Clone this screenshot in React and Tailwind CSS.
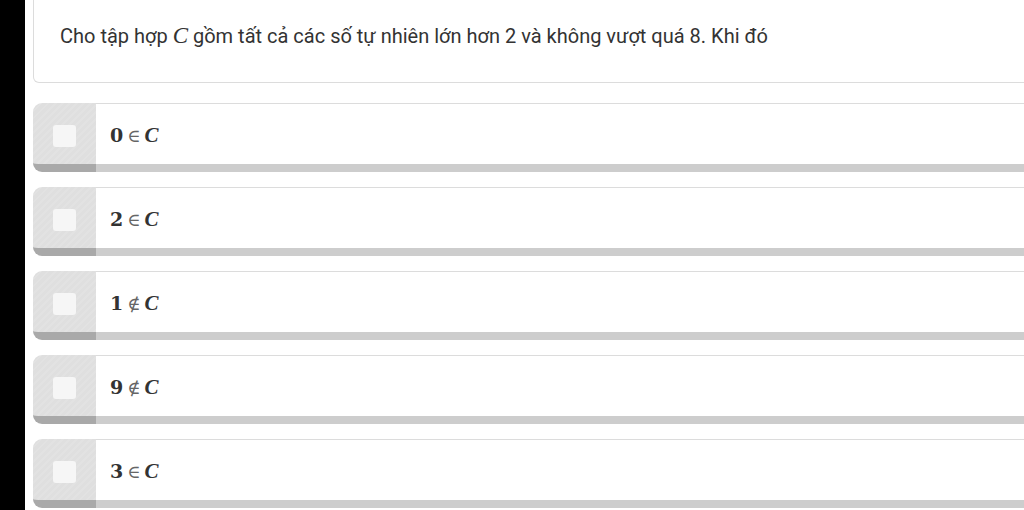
const OPTIONS = [
  { n: "0", rel: "∈" },
  { n: "2", rel: "∈" },
  { n: "1", rel: "∉" },
  { n: "9", rel: "∉" },
  { n: "3", rel: "∈" },
];

const stripes = {
  backgroundImage:
    "repeating-linear-gradient(135deg, rgba(255,255,255,0.1) 0px, rgba(255,255,255,0.1) 2px, transparent 2px, transparent 5px)",
};

function Option({ n, rel }) {
  return (
    <div className="flex w-[1100px] h-[69px]">
      <div
        className="w-[63px] flex-shrink-0 flex items-center justify-center bg-[#dfdfdf] border-b-[8px] border-[#a9a9a9] rounded-tl-[9px] rounded-bl-[9px] pt-[5px]"
        style={stripes}
      >
        <div className="w-[23px] h-[22px] rounded-[3px] bg-[#f6f6f6]" />
      </div>
      <div className="flex-1 flex items-center bg-white border-t border-[#dcdcdc] border-b-[8px] border-b-[#cdcdcd] pl-[14px] pt-[4px]">
        <span className="text-[19px] text-[#333] font-['DejaVu_Serif','Liberation_Serif',serif] flex items-baseline gap-[4px]">
          <span className="font-bold">{n}</span>
          <span className="text-[18px] text-[#666]">{rel}</span>
          <span className="italic font-bold font-['Liberation_Serif',serif] text-[21px]">C</span>
        </span>
      </div>
    </div>
  );
}

export default function App() {
  return (
    <div className="flex w-[1024px] h-[510px] overflow-hidden bg-white font-['Roboto',sans-serif]">
      <div className="w-[25px] flex-shrink-0 bg-black" />
      <div className="flex-1 pl-[8px] flex flex-col">
        {/* question card */}
        <div className="w-[1100px] h-[83px] border border-t-0 border-[#dcdcdc] rounded-bl-[6px] pl-[26px] pt-[20px]">
          <p className="text-[20px] leading-[32px] text-[#333]">
            Cho tập hợp{" "}
            <span className="italic font-['Liberation_Serif',serif] text-[23px]">C</span>{" "}
            gồm tất cả các số tự nhiên lớn hơn 2 và không vượt quá 8. Khi đó
          </p>
        </div>
        <div className="flex flex-col gap-[15px] mt-[20px]">
          {OPTIONS.map((o) => (
            <Option key={o.n} {...o} />
          ))}
        </div>
      </div>
    </div>
  );
}
